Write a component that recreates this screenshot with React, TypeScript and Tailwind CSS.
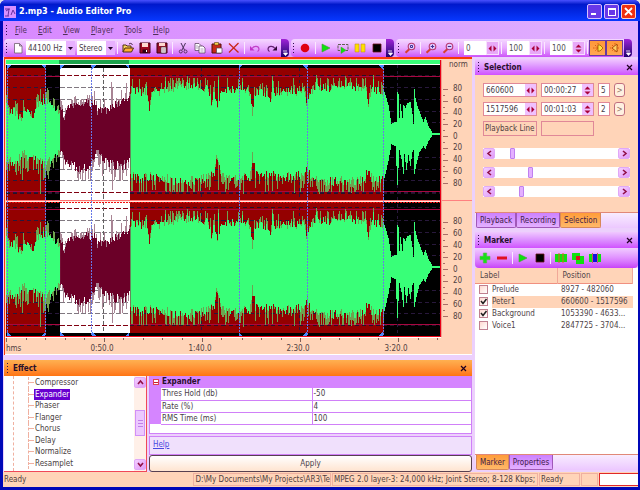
import React from "react";

/* ---------- waveform data ---------- */

type Knot = [number, number];

const TOP: Knot[] = [
  [6, 30], [9, 20], [13, 24], [20, 13], [23, 24], [33, 19], [37, 30], [44, 33], [50, 29], [58, 22],
  [60, 27], [64, 17], [69, 28], [86, 32], [94, 30], [97, 22], [102, 25], [109, 24], [112, 28], [120, 33], [129, 34],
  [132, 43], [146, 42], [149, 26], [152, 43], [166, 42], [180, 47], [195, 49], [208, 45], [211, 32], [214, 42],
  [217, 25], [220, 43], [237, 45], [249, 42], [251, 18], [253, 42], [266, 40], [269, 34], [272, 42], [302, 42],
  [305, 31], [308, 43], [320, 47], [335, 46], [350, 49], [364, 45], [367, 31], [370, 44], [381, 43],
  [384, 36], [387, 28], [390, 10], [395, 12],
];

const BOTTOM: Knot[] = [
  [6, 26], [15, 30], [22, 18], [29, 25], [38, 26], [44, 30], [50, 28], [58, 18],
  [60, 20], [68, 30], [78, 34], [90, 34], [96, 18], [105, 28], [112, 31], [120, 32], [129, 28],
  [131, 40], [140, 45], [150, 42], [160, 42], [172, 47], [190, 47], [206, 44], [214, 38], [217, 20], [220, 40],
  [232, 45], [248, 43], [251, 21], [254, 41], [270, 40], [285, 43], [303, 40], [306, 30], [309, 44],
  [325, 48], [345, 46], [360, 47], [366, 37], [370, 44], [381, 44], [384, 34], [387, 24], [390, 10], [395, 12],
];

const TAIL_TOP: Knot[] = [
  [383, 42], [387, 29], [390, 10], [394, 12], [395, 12], [396, 42], [397, 40], [398, 16], [399, 30], [401, 16],
  [402, 29], [404, 26], [406, 31], [409, 32], [411, 20], [412, 10], [413, 45], [414, 36], [416, 28], [419, 20],
  [422, 12], [424, 17], [427, 8], [431, 1], [440, 1],
];

const TAIL_BOTTOM: Knot[] = [
  [383, 44], [387, 27], [390, 10], [394, 12], [396, 51], [397, 34], [398, 16], [400, 25], [402, 40], [403, 20],
  [405, 36], [407, 21], [409, 32], [411, 18], [412, 16], [413, 40], [415, 30], [418, 18], [422, 12], [424, 15],
  [427, 7], [431, 1], [440, 1],
];

const PEAKS_TOP: Knot[] = [[7, 46], [15, 33], [23, 34], [40, 45], [43, 40], [47, 46], [48, 44], [111, 52], [112, 47], [126, 51], [146, 52], [165, 57], [187, 58], [218, 58], [241, 56], [271, 58], [315, 59], [344, 58], [372, 59]];
const PEAKS_BOTTOM: Knot[] = [[7, 46], [22, 46], [40, 60], [44, 44], [48, 45], [88, 45], [112, 56], [114, 46], [120, 47], [131, 57], [146, 58], [165, 57], [187, 58], [218, 56], [242, 60], [271, 57], [293, 59], [318, 60], [350, 59], [371, 56]];

function lerp(knots: Knot[], x: number): number {
  for (let i = 1; i < knots.length; i++) {
    if (x <= knots[i][0]) {
      const [x0, y0] = knots[i - 1];
      const [x1, y1] = knots[i];
      return y0 + ((y1 - y0) * (x - x0)) / (x1 - x0 || 1);
    }
  }
  return knots[knots.length - 1][1];
}

function random(seed: number) {
  let s = seed;
  return () => {
    s = (s * 1103515245 + 12345) & 0x7fffffff;
    return s / 0x7fffffff;
  };
}

function build(center: number) {
  const rnd = random(77);
  let core = "";
  let peak = "";
  for (let x = 6; x < 440; x++) {
    const tail = x >= 383;
    let up = lerp(tail ? TAIL_TOP : TOP, x);
    let down = lerp(tail ? TAIL_BOTTOM : BOTTOM, x);
    let pu = up;
    let pd = down;
    if (!tail) {
      const a = rnd();
      const b = rnd();
      const cap = x > 130 ? 56 : 44;
      up += (a - 0.5) * 9;
      down += (b - 0.5) * 10;
      pu = Math.min(cap, up + (rnd() > 0.4 ? rnd() * 12 : 0));
      pd = Math.min(cap + 2, down + (rnd() > 0.4 ? rnd() * 16 : 0));
      const fu = PEAKS_TOP.find((p) => p[0] === x);
      const fd = PEAKS_BOTTOM.find((p) => p[0] === x);
      if (fu) pu = fu[1];
      if (fd) pd = fd[1];
      if (fu && x > 130) up = fu[1] - 4;
    }
    const r = Math.round;
    core += `M${x} ${center - r(up)}h1V${center + r(down)}h-1z`;
    peak += `M${x} ${center - r(Math.max(pu, up))}h1V${center + r(Math.max(pd, down))}h-1z`;
  }
  return { core, peak };
}

const CHANNELS = [build(135), build(267)];
const MARKS: [number, number][] = [[7, 1], [45, -1], [60, 1], [92, 1], [129, -1], [238, 1], [306, -1], [382, -1]];

function Waveform() {
  return (
    <svg viewBox="6 61 434 276" preserveAspectRatio="none" shapeRendering="crispEdges" className="block min-h-0 w-full flex-1 basis-0">
      <defs>
        <clipPath id="sel"><rect x="60" y="66" width="70" height="270" /></clipPath>
        <clipPath id="unsel"><path d="M6 66h54v270H6zM130 66h310v270H130z" /></clipPath>
      </defs>
      <rect x="6" y="61" width="434" height="276" fill="#000" />
      <rect x="6" y="61" width="434" height="4" fill="#38ff78" />
      <rect x="59" y="61" width="70" height="4" fill="#1ca44c" />
      <rect x="6" y="65" width="434" height="1" fill="#fff" />
      <rect x="6" y="69" width="40" height="264" fill="#940000" />
      <rect x="130" y="69" width="253" height="264" fill="#940000" />
      <rect x="60" y="69" width="70" height="264" fill="#fff" />
      {[0, 132].map((o) => (
        <g key={o}>
          <path d={`M6 ${77.5 + o}H60M130 ${77.5 + o}H440M6 ${192.5 + o}H60M130 ${192.5 + o}H440`} stroke="#a80840" />
          {[0, 12, 24, 35, 47, 70, 82, 93, 105].map((y) => (
            <g key={y}>
              <path d={`M6 ${88.5 + y + o}H60M130 ${88.5 + y + o}H440`} stroke="#28183c" strokeDasharray="4 3" />
              <path d={`M60 ${88.5 + y + o}H130`} stroke="#807880" strokeDasharray="5 2" />
            </g>
          ))}
          <path d={`M60 ${76.5 + o}H130M60 ${193.5 + o}H130`} stroke="#800010" strokeDasharray="5 2" />
          <path d={`M6 ${76 + o}H60M130 ${76 + o}H440M6 ${194 + o}H60M130 ${194 + o}H440`} stroke="#281028" strokeDasharray="4 3" />
        </g>
      ))}
      <path d="M201.5 69V333M298.5 69V333M396.5 66V336" stroke="#28183c" strokeDasharray="3 3" />
      <path d="M103.5 69V333" stroke="#606060" strokeDasharray="4 2" />
      {CHANNELS.map((c, i) => (
        <g key={i}>
          <g clipPath="url(#unsel)">
            <path d={c.peak} fill="#6ea250" />
            <path d={c.core} fill="#38ff78" />
          </g>
          <g clipPath="url(#sel)">
            <path d={c.peak} fill="#a88494" />
            <path d={c.core} fill="#6b0028" />
          </g>
        </g>
      ))}
      <rect x="6" y="200" width="434" height="1" fill="#ff7070" />
      <rect x="6" y="201" width="434" height="1" fill="#ffe8e0" />
      <path d="M6 202.5H440" stroke="#f01010" strokeDasharray="2 1" />
      <path d="M7.5 66V336M45.5 66V336M91.5 66V336M238.5 66V336M306.5 66V336M382.5 66V336" stroke="#6878e8" strokeDasharray="2 1" />
      {MARKS.map(([x, d]) => (
        <path key={x} d={`M${x} 66h${4 * d}l${-4 * d} 4zM${x} 336h${4 * d}l${-4 * d} -4z`} fill="#4888ff" />
      ))}
      <rect x="6" y="336" width="434" height="1" fill="#f00818" />
      <rect x="439" y="61" width="1" height="276" fill="#e80018" />
    </svg>
  );
}

/* ---------- small parts ---------- */

const Grip = () => (
  <span className="flex h-full w-[5px] flex-none flex-col items-center justify-center gap-[2px]">
    {[0, 1, 2, 3].map((i) => <i key={i} className="block size-px bg-[#301050]" />)}
  </span>
);

const Sep = () => (
  <span className="flex w-1 flex-none justify-center"><i className="block h-3 w-px bg-[#fbe8ff]" /></span>
);

const Cap = () => (
  <span className="ml-px flex h-full w-2 flex-none items-end justify-center rounded-r-sm bg-linear-to-b from-[#a020d8] to-[#200070] pb-px text-white">
    <svg width="6" height="6" viewBox="0 0 6 6" aria-hidden="true"><path d="M1 1h4M1.500 3h4l-2 2.500z" stroke="#fff" strokeWidth=".8" fill="#fff" /></svg>
  </span>
);

function Tool({ label, children, on = false }: { label: string; children: React.ReactNode; on?: boolean }) {
  return (
    <button
      type="button"
      aria-label={label}
      className={"flex h-4 w-[17px] flex-none items-center justify-center " + (on ? "border border-[#6838a0] bg-linear-to-b from-[#ff9838] to-[#ffa850]" : "")}
    >
      <svg width="12" height="12" viewBox="0 0 12 12" className="flex-none" aria-hidden="true">{children}</svg>
    </button>
  );
}

const Bar = ({ children }: { children: React.ReactNode }) => (
  <div className="mr-[2px] flex h-[18px] flex-none items-center rounded-sm bg-linear-to-b from-[#f4d8ff] via-[#e8a8ff] to-[#cc50f8]">
    {children}
  </div>
);

function Combo({ label, value, wide = false }: { label: string; value: string; wide?: boolean }) {
  return (
    <span className={"relative h-[14px] flex-none bg-white " + (wide ? "mr-[2px] w-[49px]" : "w-[38px]")}>
      <select aria-label={label} className="block h-full w-full appearance-none bg-transparent pl-[2px] text-[#484048] outline-none">
        <option>{value}</option>
      </select>
      <span className="pointer-events-none absolute inset-y-0 right-0 flex w-[9px] items-center justify-center bg-[#e8b0ff]">
        <svg width="5" height="3" viewBox="0 0 5 3" aria-hidden="true"><path d="M0 0h5L2.500 3z" fill="#200028" /></svg>
      </span>
    </span>
  );
}

const Horizontal = () => (
  <svg width="9" height="7" viewBox="0 0 9 7" aria-hidden="true"><path d="M3.500.5v6L.5 3.500zM5.500.5v6l3-3z" fill="#a80038" /></svg>
);

const Vertical = () => (
  <svg width="7" height="9" viewBox="0 0 7 9" aria-hidden="true"><path d="M.5 3.500h6l-3-3zM.5 5.500h6l-3 3z" fill="#a80038" /></svg>
);

function Numeric({ label, value, vertical = false }: { label: string; value: string; vertical?: boolean }) {
  return (
    <span className="ml-1 flex h-[14px] w-[35px] flex-none bg-white">
      <input aria-label={label} defaultValue={value} className="min-w-0 flex-1 bg-transparent pl-[2px] text-[#505050] outline-none" />
      <button type="button" aria-label={label + " step"} className="flex w-[13px] flex-none items-center justify-center border border-[#f8e0ff] bg-[#e8a8f8]">
        {vertical ? <Vertical /> : <Horizontal />}
      </button>
    </span>
  );
}

function Field({ label, value, vertical = false }: { label: string; value: string; vertical?: boolean }) {
  return (
    <span className="flex h-[14px] min-w-0 border border-[#e08898] bg-white">
      <input aria-label={label} defaultValue={value} className="min-w-0 flex-1 bg-transparent pl-[2px] text-[#484048] outline-none" />
      <button type="button" aria-label={label + " step"} className="flex w-[11px] flex-none items-center justify-center bg-[#f0c0ff]">
        {vertical ? <Vertical /> : <Horizontal />}
      </button>
    </span>
  );
}

const ARROWS = {
  left: "M5 1L2 3.500L5 6",
  right: "M2 1L5 3.500L2 6",
  up: "M1 5L3.500 2L6 5",
  down: "M1 2L3.500 5L6 2",
};

const ArrowButton = ({ dir }: { dir: keyof typeof ARROWS }) => (
  <button type="button" aria-label={"Scroll " + dir} className="flex h-[11px] w-3 flex-none items-center justify-center rounded-[2px] border border-[#e0a8f8] bg-linear-to-br from-[#f4d0ff] to-[#e098f8]">
    <svg width="7" height="7" viewBox="0 0 7 7" aria-hidden="true"><path d={ARROWS[dir]} fill="none" stroke="#901048" strokeWidth="1.600" /></svg>
  </button>
);

const Slider = ({ label, value }: { label: string; value: number }) => (
  <div className="flex h-[11px] bg-white">
    <ArrowButton dir="left" />
    <input
      type="range"
      aria-label={label}
      defaultValue={value}
      className="h-[11px] min-w-0 flex-1 appearance-none bg-transparent [&::-webkit-slider-thumb]:h-[11px] [&::-webkit-slider-thumb]:w-[5px] [&::-webkit-slider-thumb]:appearance-none [&::-webkit-slider-thumb]:rounded-[1px] [&::-webkit-slider-thumb]:border [&::-webkit-slider-thumb]:border-[#c080f0] [&::-webkit-slider-thumb]:bg-[#e4b0ff]"
    />
    <ArrowButton dir="right" />
  </div>
);

const CloseX = ({ label }: { label: string }) => (
  <button type="button" aria-label={label} className="mr-[5px] ml-auto flex size-[7px] items-center justify-center">
    <svg width="7" height="7" viewBox="0 0 7 7" aria-hidden="true"><path d="M1 1l5 5M6 1L1 6" stroke="#200020" strokeWidth="1.200" /></svg>
  </button>
);

function PanelHead({ title, orange = false }: { title: string; orange?: boolean }) {
  return (
    <header
      className={
        "flex h-4 flex-none items-center gap-[3px] pl-px " +
        (orange ? "bg-linear-to-b from-[#ffb050] to-[#ff7410]" : "bg-linear-to-b from-[#f0c8ff] via-[#dc90ff] to-[#d050ff]")
      }
    >
      <Grip />
      <h2 className="font-bold text-[#28102c]">{title}</h2>
      <CloseX label={"Close " + title} />
    </header>
  );
}

function Tabs({ items, active }: { items: string[]; active: string }) {
  return (
    <div role="tablist" className="flex h-[15px] flex-none bg-linear-to-b from-[#f8ecff] to-[#ecc8ff] pl-px">
      {items.map((t) => (
        <button
          key={t}
          type="button"
          role="tab"
          aria-selected={t === active}
          className={
            "rounded-b-[2px] border border-t-0 px-[3px] text-[#402048] " +
            (t === active ? "border-[#d88858] bg-linear-to-b from-[#ff9c38] to-[#ffb868]" : "border-[#a058b8] bg-linear-to-b from-[#cc80ff] to-[#e4b0ff]")
          }
        >
          {t}
        </button>
      ))}
    </div>
  );
}

/* ---------- icons ---------- */

const PageIcon = <path d="M2.500 1.500h5l2.500 2.500v7h-7.500zM7.500 1.500v2.500h2.500" fill="#fff" stroke="#706070" strokeWidth=".8" />;
const OpenIcon = <><path d="M1 10V3h3l1 1h4v2" fill="#ffd860" stroke="#503010" /><path d="M1 10l2-4h8.500l-2 4z" fill="#ffb030" stroke="#503010" /><path d="M7 2c2-1.500 3 0 3.500 1" fill="none" stroke="#402040" /></>;
const SaveIcon = <><path d="M1 1h10v10H1z" fill="#a00820" stroke="#400010" /><path d="M3 1h6v4H3z" fill="#ffd8d0" /><path d="M3.500 7.500h5V11h-5z" fill="#300010" /><path d="M7 8h1v2H7z" fill="#fff" /></>;
const SaveAsIcon = <><path d="M1 1h10v10H1z" fill="#981028" stroke="#400010" /><path d="M3 1h6v3H3z" fill="#ffd8d0" /><path d="M5 5h5v6H5z" fill="#fff" stroke="#503040" strokeWidth=".7" /><path d="M6 7h3M6 9h3" stroke="#805060" strokeWidth=".7" /></>;
const CutIcon = <><path d="M4 1l3.500 7M8.500 1L5 8" stroke="#483058" fill="none" /><circle cx="3.800" cy="9.500" r="1.500" fill="none" stroke="#583060" /><circle cx="8.500" cy="9.500" r="1.500" fill="none" stroke="#583060" /></>;
const CopyIcon = <><path d="M1 1.500h4l2 2v5H1z" fill="#fff" stroke="#604868" strokeWidth=".8" /><path d="M5 4h4l2 2v5H5z" fill="#fff" stroke="#604868" strokeWidth=".8" /><path d="M2 4h2M2 6h2M6.500 7h3M6.500 9h3" stroke="#9080a0" strokeWidth=".7" /></>;
const PasteIcon = <><path d="M1 2h9v9H1z" fill="#c82818" stroke="#501008" /><path d="M3.500.5h4v2.500h-4z" fill="#ffd050" stroke="#504010" strokeWidth=".6" /><path d="M5.500 6h5.500v5h-5.500z" fill="#fff" stroke="#504050" strokeWidth=".7" /></>;
const DeleteIcon = <path d="M1 1.500l9.500 9M10.500 1L1 10.500" stroke="#c82818" strokeWidth="1.300" fill="none" />;
const UndoIcon = <><path d="M1 4v4.500h4.500z" fill="#c030c8" /><path d="M3 6.500C5 3.500 9.500 3.500 10 7c0 1-.5 2-1.500 2.500" stroke="#c040c8" strokeWidth="1.200" fill="none" /></>;
const RedoIcon = <><path d="M11 4v4.500H6.500z" fill="#300838" /><path d="M9 6.500C7 3.500 2.500 3.500 2 7c0 1 .5 2 1.500 2.500" stroke="#602070" strokeWidth="1.200" fill="none" /></>;
const PlayIcon = <path d="M2 2v8l8-4z" fill="#10e010" stroke="#40a030" strokeWidth=".6" />;
const StopIcon = <path d="M2 2h8v8H2z" fill="#000" stroke="#681018" strokeWidth=".8" />;
const ZoomIcon = (sign: "plus" | "minus" | "all") => (
  <>
    <path d="M5.500 7L1.500 10.800" stroke="#d84030" strokeWidth="2" />
    <circle cx="7.500" cy="4.500" r="3.300" fill="#e0c8ff" stroke="#b83870" strokeWidth="1.100" />
    <path d={sign === "plus" ? "M5.800 4.500h3.400M7.500 2.800v3.400" : sign === "minus" ? "M5.800 4.500h3.400" : "M6.500 3.500h2v2h-2z"} stroke="#403090" fill="none" />
  </>
);
const SpeakerIcon = <path d="M1 6h10M3 3l6 6M9 3L3 9M6 1v10" stroke="#d04000" strokeWidth=".7" strokeDasharray="1.500 1" />;

/* ---------- main window sections ---------- */

function TitleBar() {
  return (
    <header className="flex h-[21px] flex-none items-center gap-[2px] rounded-t-md bg-linear-to-b from-[#4850ff] via-[#0018cc] via-20% to-[#0838ff] pt-[2px] pr-1 pl-1">
      <svg width="12" height="12" viewBox="0 0 12 12" className="mr-px" aria-hidden="true">
        <path d="M0 0h12v12H0z" fill="#d890ff" />
        <path d="M1 3h5M2 5l3-2-1 7M7 9l2-5 2 4M1 10h4" stroke="#6830a0" fill="none" />
      </svg>
      <h1 className="mr-auto text-[9px] font-bold text-white">2.mp3 - Audio Editor Pro</h1>
      <button type="button" aria-label="Minimize" className="flex size-[15px] items-end rounded-[2px] border border-[#d8c0ff] bg-[#6838e8] p-[3px]">
        <i className="block h-[2px] w-[5px] bg-white" />
      </button>
      <button type="button" aria-label="Maximize" className="flex size-[15px] items-center justify-center rounded-[2px] border border-[#d8c0ff] bg-[#6838e8]">
        <i className="block size-[8px] border border-t-2 border-white" />
      </button>
      <button type="button" aria-label="Close" className="flex size-[15px] items-center justify-center rounded-[2px] border border-[#ffd0c8] bg-[#f03010]">
        <svg width="9" height="9" viewBox="0 0 9 9" aria-hidden="true"><path d="M1 1l7 7M8 1L1 8" stroke="#fff" strokeWidth="1.800" /></svg>
      </button>
    </header>
  );
}

function MenuBar() {
  return (
    <nav className="flex h-[18px] flex-none items-center pl-px text-[#503058]">
      <Grip />
      <div className="flex gap-[11px] pl-[6px]">
        {["File", "Edit", "View", "Player", "Tools", "Help"].map((m) => (
          <button key={m} type="button">
            <u>{m[0]}</u>{m.slice(1)}
          </button>
        ))}
      </div>
    </nav>
  );
}

function ToolBars() {
  return (
    <div className="flex h-[18px] flex-none items-center pl-px">
      <Bar>
        <Grip />
        <Tool label="New">{PageIcon}</Tool>
        <Combo label="Sample rate" value="44100 Hz" wide />
        <Combo label="Channels" value="Stereo" />
        <Sep />
        <Tool label="Open">{OpenIcon}</Tool>
        <Tool label="Save">{SaveIcon}</Tool>
        <Tool label="Save as">{SaveAsIcon}</Tool>
        <Sep />
        <Tool label="Cut">{CutIcon}</Tool>
        <Tool label="Copy">{CopyIcon}</Tool>
        <Tool label="Paste">{PasteIcon}</Tool>
        <Tool label="Delete">{DeleteIcon}</Tool>
        <Sep />
        <Tool label="Undo">{UndoIcon}</Tool>
        <Tool label="Redo">{RedoIcon}</Tool>
        <Cap />
      </Bar>
      <Bar>
        <Grip />
        <Tool label="Record"><circle cx="6" cy="6" r="4.300" fill="#e00010" /></Tool>
        <Sep />
        <Tool label="Play">{PlayIcon}</Tool>
        <Tool label="Play loop">
          <path d="M3 8.500H1V2.500h10v6H9" fill="none" stroke="#606050" strokeDasharray="3 1" />
          <path d="M4 5v6.500l5-3.200z" fill="#10e010" stroke="#40a030" strokeWidth=".5" />
        </Tool>
        <Tool label="Pause"><path d="M1 2h4v8H1zM7 2h4v8H7z" fill="#ffe000" stroke="#c09020" strokeWidth=".6" /></Tool>
        <Tool label="Stop">{StopIcon}</Tool>
        <Cap />
      </Bar>
      <Bar>
        <Grip />
        <Tool label="Zoom selection">{ZoomIcon("all")}</Tool>
        <Sep />
        <Tool label="Zoom in">{ZoomIcon("plus")}</Tool>
        <Tool label="Zoom out">{ZoomIcon("minus")}</Tool>
        <Sep />
        <Numeric label="Offset" value="0" />
        <Sep />
        <Numeric label="Zoom" value="100" />
        <Sep />
        <Numeric label="Volume" value="100" vertical />
        <Sep />
        <Tool label="Left channel" on>{SpeakerIcon}<path d="M6 3h2l3 3-3 3H6z" fill="#ffe040" stroke="#a06000" strokeWidth=".8" /></Tool>
        <Tool label="Right channel" on>{SpeakerIcon}<path d="M8 2v8L3 6z" fill="#ffd060" stroke="#a04000" strokeWidth=".8" /></Tool>
        <Cap />
      </Bar>
    </div>
  );
}

const SCALE = [80, 60, 40, 20, 0, 20, 40, 60, 80];

const ChannelScale = () => (
  <div className="flex h-[106px] flex-none">
    <svg width="6" height="106" viewBox="0 0 6 106" className="flex-none" shapeRendering="crispEdges" aria-hidden="true">
      <path d={SCALE.map((_, i) => `M1 ${6 + Math.round(i * 11.75)}h5`).join("")} stroke="#a87068" />
      <path d={SCALE.slice(1).map((_, i) => `M1 ${12 + Math.round(i * 11.75)}h2`).join("")} stroke="#a87068" />
    </svg>
    <div className="flex flex-col pl-[5px] text-[#504040]">
      {SCALE.map((v, i) => (
        <span key={i} className="flex min-h-0 flex-1 items-center">{v}</span>
      ))}
    </div>
  </div>
);

function WaveView() {
  return (
    <section className="flex min-h-0 flex-1 flex-col border-t-2 border-l border-[#f83808] bg-[#ffd4b8]">
      <div className="flex min-h-0 flex-1 pt-px pl-px">
        <div className="flex min-w-0 flex-1 flex-col">
          <Waveform />
        </div>
        <div className="flex w-[31px] flex-none flex-col border-l border-[#f0a090]">
          <span className="mb-[14px] flex h-[9px] items-center pl-[7px] text-[#504040]">norm</span>
          <ChannelScale />
          <i className="mt-[11px] mb-[15px] block h-px bg-[#ff8080]" />
          <ChannelScale />
        </div>
      </div>
      <svg viewBox="0 0 466 5" preserveAspectRatio="none" className="block h-[5px] w-full flex-none" shapeRendering="crispEdges" aria-hidden="true">
        <path d="M0 .5H435" stroke="#fff" />
        <path d={Array.from({ length: 23 }, (_, i) => `M${Math.round(1 + i * 19.55)}.500 1v${i % 5 === 0 ? 4 : 2}`).join("")} stroke="#806058" />
      </svg>
      <div className="flex h-[13px] flex-none items-center border-b border-white pr-[27px] text-[#504040]">
        <span className="w-12 flex-none pl-px">hms</span>
        {["0:50.0", "1:40.0", "2:30.0", "3:20.0"].map((t) => (
          <span key={t} className="flex-1 text-center">{t}</span>
        ))}
      </div>
    </section>
  );
}

const EFFECTS = ["Compressor", "Expander", "Phaser", "Flanger", "Chorus", "Delay", "Normalize", "Resamplet"];

function EffectPanel() {
  return (
    <section className="mt-[5px] flex h-[112px] flex-none flex-col">
      <PanelHead title="Effect" orange />
      <div className="flex min-h-0 flex-1 gap-[2px]">
        <div className="flex w-[143px] flex-none border-r border-b border-[#f04858] bg-white">
          <ul className="ml-[9px] flex flex-1 flex-col border-l border-dashed border-[#f0b0a0] pt-px pb-[2px] pl-[14px] text-[#484040]">
            {EFFECTS.map((e) => (
              <li key={e} className="flex min-h-0 flex-1 items-center border-l border-dashed border-[#f0b0a0]">
                <i className="block w-[5px] border-t border-dashed border-[#f0b0a0]" />
                <button type="button" className={"px-px leading-[11px] " + (e === "Expander" ? "bg-[#6800d0] text-white" : "")}>{e}</button>
              </li>
            ))}
          </ul>
          <div className="flex w-3 flex-none flex-col items-center bg-[#fff0e8] py-px">
            <ArrowButton dir="up" />
            <button type="button" aria-label="Scroll thumb" className="mt-[22px] flex h-[26px] w-[10px] flex-col items-center justify-center gap-[2px] border border-[#d090f8] bg-[#ecc8ff]">
              {[0, 1, 2].map((i) => <i key={i} className="block h-px w-[5px] bg-[#c080e8]" />)}
            </button>
            <span className="mt-auto"><ArrowButton dir="down" /></span>
          </div>
        </div>
        <div className="flex min-w-0 flex-1 flex-col">
          <div className="flex-1 border border-t-0 border-[#d080f8] bg-white">
            <table className="w-full table-fixed border-collapse text-[#484048]">
              <thead>
                <tr className="h-3 bg-[#d585ff]">
                  <th className="w-[11px] p-0">
                    <i className="mx-auto flex size-[6px] items-center border border-[#e04050] bg-white"><i className="block h-px w-full bg-[#c02030]" /></i>
                  </th>
                  <th className="w-[151px] p-0 pl-px text-left leading-3 font-bold text-[#28102c]">Expander</th>
                  <th className="p-0" />
                </tr>
              </thead>
              <tbody>
                {[["Thres Hold (db)", "-50"], ["Rate (%)", "4"], ["RMS Time (ms)", "100"]].map(([k, v]) => (
                  <tr key={k} className="h-3">
                    <td className="bg-[#d585ff] p-0" />
                    <td className="border-b border-[#d080f8] p-0 pl-px leading-[11px]">{k}</td>
                    <td className="border-b border-l border-[#d080f8] p-0 pl-px leading-[11px]">{v}</td>
                  </tr>
                ))}
              </tbody>
            </table>
          </div>
          <div className="mt-[2px] flex h-[19px] flex-none border border-[#d080f8] bg-[#f0e0fc] px-[3px] pt-[2px]">
            <a href="#help" className="text-[#4848e0] underline">Help</a>
          </div>
          <button type="button" className="h-[17px] flex-none rounded-[3px] border border-[#584050] bg-linear-to-b from-white to-[#ffe4d0] text-[#484048]">Apply</button>
        </div>
      </div>
    </section>
  );
}

function SelectionPanel() {
  return (
    <section className="flex flex-none flex-col">
      <PanelHead title="Selection" />
      <div className="flex flex-col gap-2 border-b border-[#e08878] bg-[#ffd4b8] px-2 pt-[8px] pb-[15px]">
        <div className="mb-1 grid grid-cols-[1fr_53px_12px_12px] gap-x-[4px] gap-y-[5px] pr-1">
          {[["Start", "660600", "00:00:27", "5"], ["End", "1517596", "00:01:03", "2"]].map(([n, a, b, c]) => (
            <React.Fragment key={n}>
              <Field label={n + " sample"} value={a} />
              <Field label={n + " time"} value={b} vertical />
              <input aria-label={n + " marker"} defaultValue={c} className="h-[14px] min-w-0 border border-[#e08898] bg-white pl-[2px] text-[#484048] outline-none" />
              <button type="button" aria-label={n + " apply"} className="flex h-[14px] w-[11px] items-center justify-center rounded-[3px] border border-[#c07080] bg-[#fff0e0] text-[#907060]">&gt;</button>
            </React.Fragment>
          ))}
          <span className="flex h-[15px] items-center border border-[#e08898] pl-px whitespace-nowrap text-[#504040]">Playback Line</span>
          <output aria-label="Playback position" className="h-[15px] border border-[#e08898]" />
        </div>
        <Slider label="Pan" value={13} />
        <Slider label="Tempo" value={28} />
        <Slider label="Pitch" value={20} />
      </div>
      <Tabs items={["Playback", "Recording", "Selection"]} active="Selection" />
    </section>
  );
}

const MARKERS: [string, string, boolean][] = [
  ["Prelude", "8927 - 482060", false],
  ["Peter1", "660600 - 1517596", true],
  ["Background", "1053390 - 4633...", true],
  ["Voice1", "2847725 - 3704...", false],
];

function MarkerPanel() {
  return (
    <section className="mt-1 flex min-h-0 flex-1 flex-col">
      <PanelHead title="Marker" />
      <div className="flex h-5 flex-none items-center rounded-b-sm bg-linear-to-b from-[#f0ccff] via-[#e090ff] to-[#c840f8] pl-px">
        <Tool label="Add marker"><path d="M4.300 1h3.400v3.300H11v3.400H7.700V11H4.300V7.700H1V4.300h3.300z" fill="#18e018" stroke="#58b848" strokeWidth=".6" /></Tool>
        <Tool label="Remove marker"><path d="M1 4.500h10v3H1z" fill="#e01020" /></Tool>
        <Sep />
        <Tool label="Play marker">{PlayIcon}</Tool>
        <Tool label="Stop marker">{StopIcon}</Tool>
        <Sep />
        <Tool label="Select markers"><path d="M0 2h12v8H0z" fill="#10e010" /><path d="M4 1v10M8 1v10" stroke="#e06020" /></Tool>
        <Tool label="Merge markers"><path d="M0 1h8v7H0zM4 4h8v8H4z" fill="#10e010" /><path d="M4 4h4v4H4z" fill="#e01020" /></Tool>
        <Tool label="Split markers"><path d="M0 2h12v8H0z" fill="#10e010" /><path d="M4 2h4v8H4z" fill="#1010e0" /><path d="M3.500 1v10M8.500 1v10" stroke="#c06060" /></Tool>
      </div>
      <div className="flex-1 border-b border-[#e08878] bg-white pr-[5px]">
        <table className="w-full table-fixed border-collapse text-[#504448]">
          <thead>
            <tr className="h-[15px] border-b border-[#f09080] bg-[#ffd4b8]">
              <th className="w-[82px] border-r border-[#f0a898] p-0 pl-[5px] text-left font-normal">Label</th>
              <th className="border-r border-[#f0a898] p-0 pl-[5px] text-left font-normal">Position</th>
            </tr>
          </thead>
          <tbody>
            {MARKERS.map(([name, pos, on], i) => (
              <tr key={name} className="h-[12px]">
                <td className="p-0">
                  <label className="flex items-center">
                    <span className="relative mr-1 ml-1 flex size-[9px] flex-none">
                      <input type="checkbox" defaultChecked={on} className="peer size-[9px] appearance-none border border-[#c08090] bg-linear-to-br from-[#ffd8d0] to-white" />
                      <svg viewBox="0 0 9 9" className="pointer-events-none absolute inset-0 hidden peer-checked:block" aria-hidden="true"><path d="M2 4l2 2.500L7.500 2" fill="none" stroke="#202020" strokeWidth="1.500" /></svg>
                    </span>
                    <span className={"flex-1 leading-3 " + (i === 1 ? "bg-[#ffd4b8]" : "")}>{name}</span>
                  </label>
                </td>
                <td className={"p-0 pl-[4px] leading-3 whitespace-nowrap " + (i === 1 ? "bg-[#ffd4b8]" : "")}>{pos}</td>
              </tr>
            ))}
          </tbody>
        </table>
      </div>
      <Tabs items={["Marker", "Properties"]} active="Marker" />
    </section>
  );
}

function StatusBar() {
  return (
    <footer className="flex h-[15px] flex-none items-center gap-px bg-[#ffd4b8] py-px text-[#504040]">
      <span className="flex-1 pl-px">Ready</span>
      <span className="h-full flex-none border border-[#f0b0a0] pl-px whitespace-nowrap">D:\My Documents\My Projects\AR3\Te</span>
      <span className="h-full w-[206px] flex-none border border-[#f0b0a0] pl-px whitespace-nowrap">MPEG 2.0 layer-3: 24,000 kHz; Joint Stereo; 8-128 Kbps;</span>
      <span className="h-full w-[41px] flex-none border border-[#f0b0a0] px-px">Ready</span>
      <span className="h-full w-[17px] flex-none border border-[#f0b0a0]" />
      <span className="h-full w-[39px] flex-none border border-r-0 border-[#e02828] bg-white" />
    </footer>
  );
}

export default function App() {
  return (
    <main className="flex h-screen flex-col overflow-hidden bg-[#e0e0f0] font-['DejaVu_Sans_Condensed','DejaVu_Sans',sans-serif] text-[8px] leading-[11px]">
      <div className="flex min-h-0 flex-1 flex-col rounded-t-md bg-[#0008b8]">
        <TitleBar />
        <div className="mr-[2px] mb-[3px] ml-[3px] flex min-h-0 flex-1 flex-col bg-linear-to-r from-[#d888ff] to-[#e0b0ff]">
          <MenuBar />
          <ToolBars />
          <div className="flex min-h-0 flex-1 gap-[3px] bg-[#ecd0fc] pl-px">
            <div className="flex min-w-0 flex-1 flex-col">
              <WaveView />
              <EffectPanel />
            </div>
            <aside className="flex w-[163px] flex-none flex-col pt-[2px] pb-[2px]">
              <SelectionPanel />
              <MarkerPanel />
            </aside>
          </div>
          <StatusBar />
        </div>
      </div>
    </main>
  );
}
